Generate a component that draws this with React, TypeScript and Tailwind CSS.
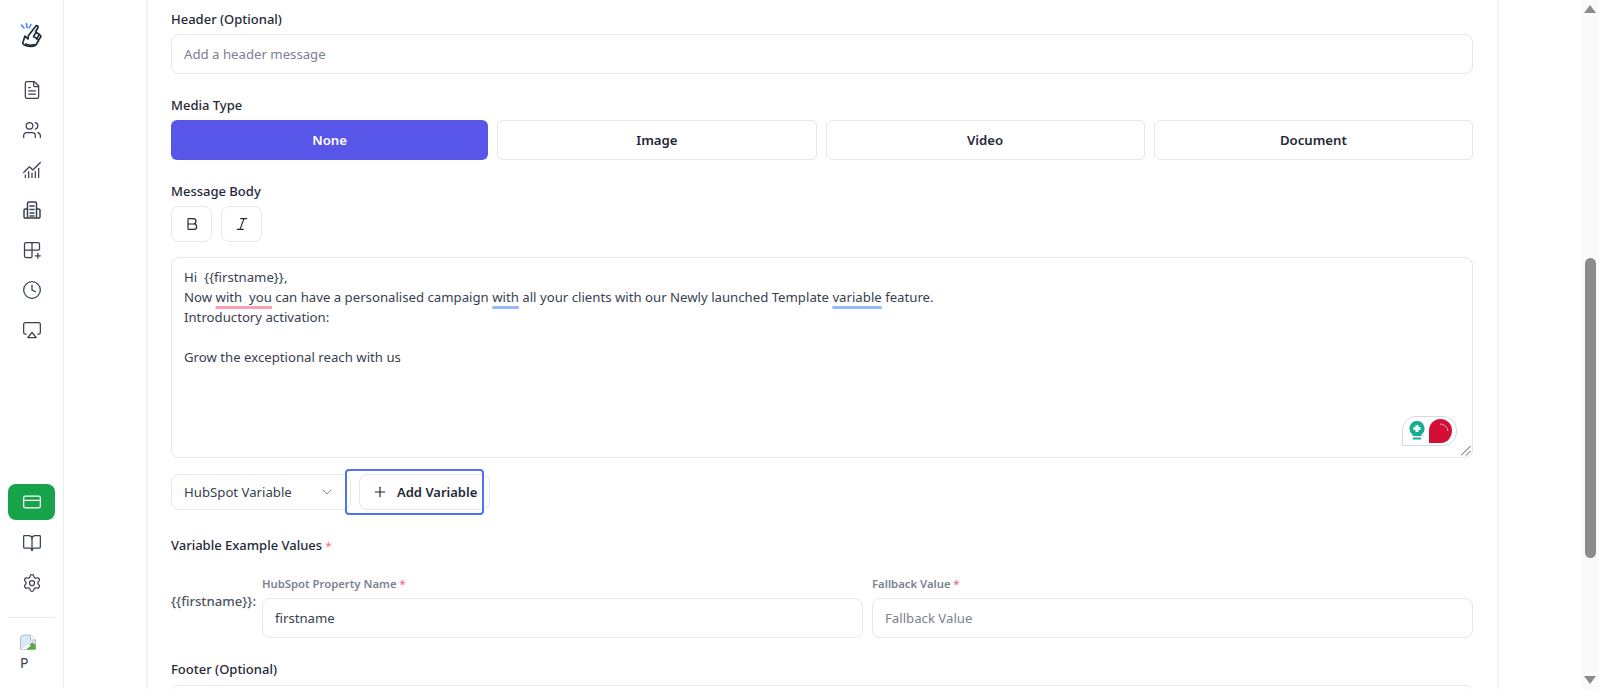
import { Airplay, Bold, BookOpen, ChartNoAxesCombined, ChevronDown, Clock, CreditCard, FileText, Grid2x2Plus, Italic, Plus, Settings, Users } from "lucide-react"

const topIcons = [FileText, Users, ChartNoAxesCombined, null, Grid2x2Plus, Clock, Airplay]

function HotelIcon() {
  return (
    <svg width="20" height="20" viewBox="0 0 20 20" fill="none" stroke="#374151" strokeWidth="1.5" strokeLinejoin="round" strokeLinecap="round">
      <path d="M5.5 18V3.5a1.5 1.5 0 0 1 1.5-1.5h6a1.5 1.5 0 0 1 1.5 1.5V18" />
      <path d="M5.5 9H3.2A1.2 1.2 0 0 0 2 10.2v6.6A1.2 1.2 0 0 0 3.200 18h13.600a1.200 1.200 0 0 0 1.200-1.200v-6.600A1.200 1.200 0 0 0 16.800 9H14.500" />
      <path d="M8 6h4M8 9.500h4M8 13h4M8 16h4" />
    </svg>
  )
}

function Logo() {
  return (
    <svg width="24" height="28" viewBox="0 0 24 28" fill="none" strokeLinecap="round" strokeLinejoin="round">
      <path d="M1.500 2l2.500 3M6.500.5l.5 4M11 1.500L9 5" stroke="#3b82f6" strokeWidth="1.500" />
      <path d="M5 13l3 3 .5-3.500 7-9c1-1.500 3-.5 2.500 1L15.500 9l4 2.500 1.500 2-2 3-3 5.500c-3 2-7.500 1.500-10.500.5-2-.700-3.500-2-2.500-3.500L5 13z" stroke="#1f2937" strokeWidth="1.700" fill="#fff" />
      <path d="M16 9.500l-2.500 4 4 2.500M19 12l-2.500 4" stroke="#1f2937" strokeWidth="1.500" />
      <path d="M5.500 21c3 1.500 6 1.500 9 .5" stroke="#1f2937" strokeWidth="1.500" />
    </svg>
  )
}

function BrokenImage() {
  return (
    <svg width="16" height="16" viewBox="0 0 16 16">
      <path d="M.5 4a3 3 0 0 1 3-3h7l5 5v9.500H.5z" fill="#dbe7f6" stroke="#b9bec6" />
      <path d="M10.500 1v5h5" fill="#fff" stroke="#b9bec6" />
      <path d="M4 15.500l8-7 3.500 2v5z" fill="#5aa84a" />
      <path d="M1 15.500l7-5 3 1-5 4z" fill="#fff" />
    </svg>
  )
}

function Sidebar() {
  return (
    <aside className="flex h-full w-[64px] shrink-0 flex-col items-center border-r border-[#eceef1] bg-white">
      <div className="mt-[22px] flex h-[30px] items-center justify-center">
        <Logo />
      </div>
      <nav className="mt-[28px] flex flex-col items-center gap-[20px]">
        {topIcons.map((Icon, i) => (
          <div key={i} className="flex h-[20px] w-[20px] items-center justify-center">
            {Icon ? <Icon size={20} strokeWidth={1.5} color="#374151" /> : <HotelIcon />}
          </div>
        ))}
      </nav>
      <div className="flex-1" />
      <div className="mb-[1px] flex h-[36px] w-[47px] items-center justify-center rounded-lg bg-[#16a34a]">
        <CreditCard size={20} strokeWidth={1.5} color="#fff" />
      </div>
      <div className="mt-[12px] flex flex-col items-center gap-[20px]">
        <BookOpen size={20} strokeWidth={1.5} color="#374151" />
        <Settings size={20} strokeWidth={1.5} color="#374151" />
      </div>
      <div className="mt-[24px] h-px w-[47px] bg-[#e8eaed]" />
      <div className="mt-[16px] flex h-[55px] w-[47px] flex-col items-start pl-[12px]">
        <BrokenImage />
        <span className="mt-[3px] text-[14px] leading-[20px] text-[#374151]">P</span>
      </div>
    </aside>
  )
}

function Label({ children }: { children: React.ReactNode }) {
  return <div className="text-[13px] font-medium leading-[20px] text-[#1f2937]">{children}</div>
}

function Star() {
  return <span className="text-[11px] text-[#f87171]">*</span>
}

function TextBox({ placeholder, value }: { placeholder?: string; value?: string }) {
  return (
    <div className={`flex h-[40px] items-center rounded-lg border border-[#e5e7eb] bg-white px-[12px] pt-[2px] text-[13.2px] ${value ? "text-[#374151]" : "text-[#7b8290]"}`}>
      {value || placeholder}
    </div>
  )
}

function MediaButton({ label, active }: { label: string; active?: boolean }) {
  return (
    <div className={`flex h-[40px] flex-1 items-center justify-center rounded-md pt-[2px] text-[13.2px] font-semibold ${active ? "bg-[#5856e8] text-white" : "border border-[#e5e7eb] bg-white text-[#1f2937]"}`}>
      {label}
    </div>
  )
}

function Squiggle({ color, children }: { color: string; children: React.ReactNode }) {
  return (
    <span className="underline decoration-[2.5px] underline-offset-[4px] [text-decoration-skip-ink:none]" style={{ textDecorationColor: color }}>
      {children}
    </span>
  )
}

function MessageBody() {
  return (
    <div className="relative mt-[15px] h-[201px] rounded-lg border border-[#e5e7eb] bg-white px-[12px] py-[9px] text-[13.2px] leading-[20px] text-[#374151]">
      <div>Hi&nbsp; {"{{firstname}}"},</div>
      <div>
        Now <Squiggle color="#fb9fb1">with&nbsp; you</Squiggle> can have a personalised campaign <Squiggle color="#93bbf5">with</Squiggle> all your clients with our Newly launched Template <Squiggle color="#93bbf5">variable</Squiggle> feature.
      </div>
      <div>Introductory activation:</div>
      <div className="h-[20px]" />
      <div>Grow the exceptional reach with us</div>

      <div className="absolute bottom-[11px] right-[15px] flex h-[30px] w-[55px] items-center justify-between rounded-[14px] rounded-bl-none border border-[#d5d8e6] bg-white pl-[6px] pr-[3px]">
        <svg width="16" height="20" viewBox="0 0 16 20">
          <path d="M8 0a7.500 7.500 0 0 0-4.500 13.500V15h9v-1.500A7.500 7.500 0 0 0 8 0z" fill="#10b090" />
          <path d="M8 4v7M4.500 7.500h7" stroke="#fff" strokeWidth="3" />
          <path d="M4 17.500h8" stroke="#10b090" strokeWidth="2" />
        </svg>
        <svg width="24" height="24" viewBox="0 0 24 24">
          <path d="M0 24V11.500A11.500 11.500 0 0 1 23 11.500c0 6-4 12.500-11.500 12.500z" fill="#d40f35" />
          <path d="M11 5a8 8 0 0 1 8 7" fill="none" stroke="#f5a9b8" strokeWidth="1" />
        </svg>
      </div>
      <svg className="absolute bottom-[1px] right-[1px]" width="10" height="10" viewBox="0 0 10 10" stroke="#555" strokeWidth="1">
        <path d="M0 9.500L9.500 0M5 9.500L9.500 5" />
      </svg>
    </div>
  )
}

function VariableRow() {
  return (
    <div className="relative mt-[16px] flex h-[36px] items-center">
      <div className="flex h-full w-[180px] items-center justify-between rounded-lg border border-[#e5e7eb] bg-white pl-[12px] pr-[15px] text-[13.2px] text-[#374151]">
        <span className="pt-[2px]">HubSpot Variable</span>
        <ChevronDown size={16} strokeWidth={1.25} color="#6b7280" />
      </div>
      <div className="ml-[8px] flex h-full w-[131px] items-center rounded-lg border border-[#e5e7eb] bg-white pl-[12px] text-[13px] font-semibold text-[#1f2937]">
        <Plus size={16} strokeWidth={1.75} color="#1f2937" />
        <span className="ml-[9px] pt-[2px]">Add Variable</span>
      </div>
      <div className="absolute left-[174px] top-[-5px] h-[46px] w-[139px] rounded-[4px] border-2 border-[#4f74f0]" />
    </div>
  )
}

function ExampleValues() {
  return (
    <div className="mt-[20px] flex items-start">
      <div className="mt-[15px] w-[91px] shrink-0 text-[13.2px] font-medium leading-[20px] text-[#4b5563]">{"{{firstname}}"}:</div>
      <div className="flex flex-1 gap-[9px]">
        <div className="flex-1">
          <div className="mb-[6px] text-[11.3px] font-semibold leading-[16px] text-[#7b8290]">
            HubSpot Property Name <Star />
          </div>
          <TextBox value="firstname" />
        </div>
        <div className="flex-1">
          <div className="mb-[6px] text-[11.3px] font-semibold leading-[16px] text-[#7b8290]">
            Fallback Value <Star />
          </div>
          <TextBox placeholder="Fallback Value" />
        </div>
      </div>
    </div>
  )
}

function Scrollbar() {
  return (
    <div className="flex h-full w-[18px] shrink-0 flex-col items-center bg-[#fafafa] pt-[5px]">
      <div className="h-0 w-0 border-x-[6px] border-b-[8px] border-x-transparent border-b-[#8b8b8b]" />
      <div className="mt-[245px] h-[300px] w-[11px] rounded-full bg-[#8b8b8b]" />
      <div className="flex-1" />
      <div className="mb-[5px] h-0 w-0 border-x-[6px] border-t-[8px] border-x-transparent border-t-[#8b8b8b]" />
    </div>
  )
}

export default function App() {
  return (
    <div className="flex h-screen w-full overflow-hidden bg-white font-['Noto_Sans',sans-serif]">
      <Sidebar />
      <main className="ml-[82px] h-full w-[1353px] shrink-0 overflow-hidden border-x-2 border-[#f1f2f4] bg-white pl-[23px] pr-[24px] pt-[9px]">
        <Label>Header (Optional)</Label>
        <div className="mt-[5px]">
          <TextBox placeholder="Add a header message" />
        </div>

        <div className="mt-[21px]">
          <Label>Media Type</Label>
        </div>
        <div className="mt-[5px] flex gap-[9px]">
          <MediaButton label="None" active />
          <MediaButton label="Image" />
          <MediaButton label="Video" />
          <MediaButton label="Document" />
        </div>

        <div className="mt-[21px]">
          <Label>Message Body</Label>
        </div>
        <div className="mt-[5px] flex gap-[9px]">
          <div className="flex h-[36px] w-[41px] items-center justify-center rounded-lg border border-[#e5e7eb]">
            <Bold size={16} strokeWidth={1.75} color="#1f2937" />
          </div>
          <div className="flex h-[36px] w-[41px] items-center justify-center rounded-lg border border-[#e5e7eb]">
            <Italic size={16} strokeWidth={1.75} color="#1f2937" />
          </div>
        </div>

        <MessageBody />
        <VariableRow />

        <div className="mt-[25px]">
          <Label>
            Variable Example Values <Star />
          </Label>
        </div>
        <ExampleValues />

        <div className="mt-[21px]">
          <Label>Footer (Optional)</Label>
        </div>
        <div className="mt-[6px]">
          <TextBox placeholder="" />
        </div>
      </main>
      <div className="flex-1" />
      <Scrollbar />
    </div>
  )
}
